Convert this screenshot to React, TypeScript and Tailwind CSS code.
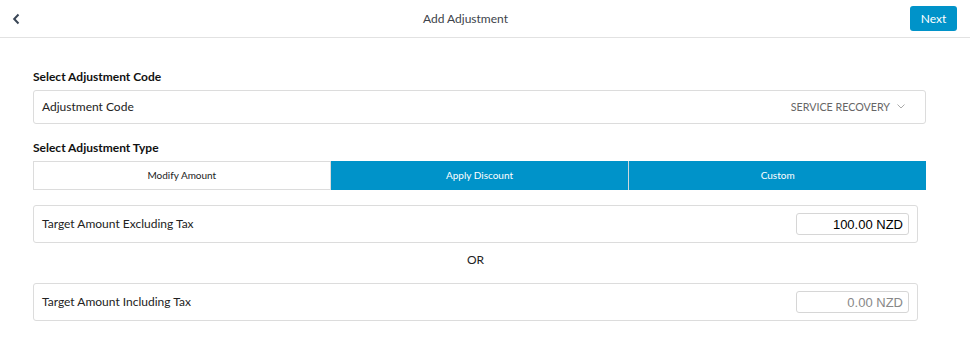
import React from 'react'

const lato = { fontFamily: 'Lato, "Open Sans", sans-serif' }

function Header() {
  return (
    <div className="flex h-[38px] items-center border-b border-[#e2e2e2] bg-white">
      <div className="flex w-[21px] justify-end">
        <svg width="9" height="12" viewBox="0 0 9 12" className="text-[#3a4656]">
          <path d="M6.5 1.5 L2.2 6 L6.5 10.5" fill="none" stroke="currentColor" strokeWidth="2" />
        </svg>
      </div>
      <div className="flex-1 text-center text-[12px] text-[#3d434a]">Add Adjustment</div>
      <div className="flex w-[60px] pr-[13px]">
        <button
          type="button"
          className="h-[25px] w-[47px] rounded-[3px] bg-[#0093c9] text-[12px] text-white"
        >
          Next
        </button>
      </div>
    </div>
  )
}

function SectionLabel({ children }: { children: React.ReactNode }) {
  return <div className="text-[12px] font-bold leading-4 text-[#111]">{children}</div>
}

function AmountRow({ label, value, placeholder }: { label: string; value?: string; placeholder: string }) {
  return (
    <div className="flex h-[38px] items-center justify-between rounded-[3px] border border-[#dcdcdc] pl-2 pr-2">
      <span className="text-[12px] text-[#222]">{label}</span>
      <input
        readOnly
        value={value ?? ''}
        placeholder={placeholder}
        className="h-[22px] w-[113px] rounded-[3px] border border-[#d6d6d6] pr-[5px] text-right text-[13px] text-black outline-none placeholder:text-[#888]"
        style={{ fontFamily: '"Liberation Sans", Arial, sans-serif' }}
      />
    </div>
  )
}

export default function App() {
  return (
    <div className="h-[345px] w-[970px] bg-white" style={lato}>
      <Header />
      <div className="pl-[33px] pr-[44px] pt-[31px]">
        <SectionLabel>Select Adjustment Code</SectionLabel>
        <div className="mt-[5px] flex h-[34px] items-center justify-between rounded-[3px] border border-[#dcdcdc] pl-2 pr-[20px]">
          <span className="text-[12px] text-[#222]">Adjustment Code</span>
          <div className="flex items-center gap-[7px] text-[10.7px] text-[#666]">
            <span>SERVICE RECOVERY</span>
            <svg width="8" height="5" viewBox="0 0 8 5">
              <path d="M0.5 0.5 L4 4 L7.5 0.5" fill="none" stroke="#aaa" strokeWidth="1" />
            </svg>
          </div>
        </div>
        <div className="mt-[16px]">
          <SectionLabel>Select Adjustment Type</SectionLabel>
        </div>
        <div className="mt-[5px] grid h-[29px] grid-cols-3 text-[10px]">
          <div className="flex items-center justify-center border border-[#dcdcdc] bg-white text-[#222]">
            Modify Amount
          </div>
          <div className="flex items-center justify-center bg-[#0093c9] text-white">Apply Discount</div>
          <div className="flex items-center justify-center border-l border-[#cfd8dc] bg-[#0093c9] text-white">
            Custom
          </div>
        </div>
        <div className="mr-[8px]">
          <div className="mt-[15px]">
            <AmountRow label="Target Amount Excluding Tax" value="100.00 NZD" placeholder="0.00 NZD" />
          </div>
          <div className="flex h-[40px] justify-center pt-[9px] text-[12px] leading-4 text-[#222]">OR</div>
          <AmountRow label="Target Amount Including Tax" placeholder="0.00 NZD" />
        </div>
      </div>
    </div>
  )
}
